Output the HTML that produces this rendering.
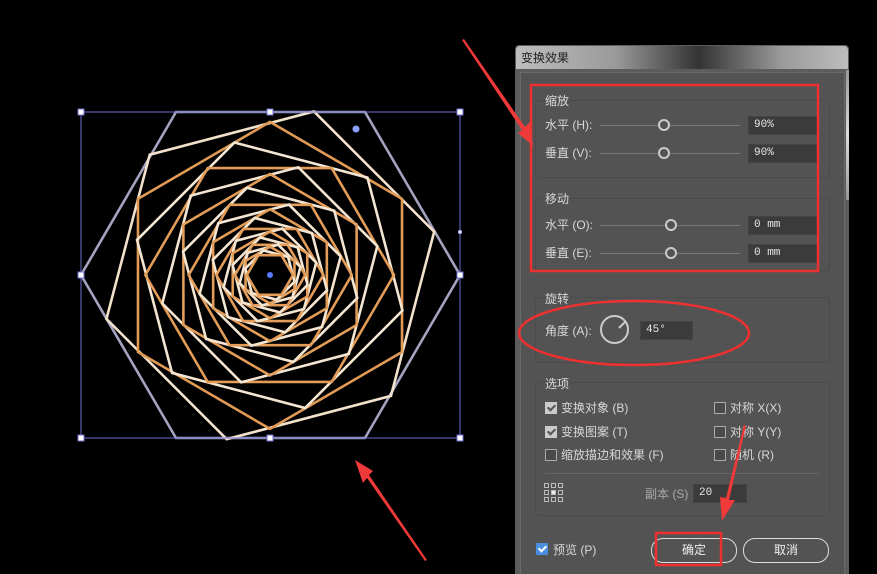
<!DOCTYPE html>
<html><head><meta charset="utf-8"><style>
html,body{margin:0;width:877px;height:574px;overflow:hidden}
body{background:#000;position:relative;font-family:"Liberation Sans","Noto Sans CJK SC",sans-serif;font-size:12px;color:#d8d8d8}
.a{position:absolute;line-height:14px}
.in{position:absolute;background:#3b3b3b;border:1px solid #444;color:#e6e6e6;font-family:"Liberation Mono","Noto Sans CJK SC",monospace;font-size:11px;line-height:17px;padding-left:5px;box-sizing:border-box}
.grp{position:absolute;border:1px solid #4b4b4b;border-radius:3px}
.sl{position:absolute;height:1px;background:#777}
.kn{position:absolute;width:8px;height:8px;border:2px solid #ccc;border-radius:50%;background:#535353}
.cb{position:absolute;width:10px;height:10px;border:1px solid #aaa;background:#4a4a4a}
.cb.on{background:#ccc;border-color:#ccc}
.cb.on::after{content:"";position:absolute;left:3px;top:0px;width:3px;height:6px;border:solid #555;border-width:0 2px 2px 0;transform:rotate(45deg)}
.btn{position:absolute;border:1.5px solid #ddd;border-radius:12px;text-align:center;line-height:22px;color:#eee;font-size:12px;box-sizing:border-box}
</style></head><body>
<svg class="a" style="left:0;top:0" width="877" height="574">
<defs><polygon id="h" points="-94,-163 95,-163 190,0 95,163 -94,163 -189,0" vector-effect="non-scaling-stroke"/></defs>
<g transform="translate(270,275)" fill="none" stroke-width="2.6">
<use href="#h" stroke="#a3a3c0"/>
<g transform="rotate(45) scale(0.9)"><use href="#h" stroke="#f2e2cc"/>
<g transform="rotate(45) scale(0.9)"><use href="#h" stroke="#e09a55"/>
<g transform="rotate(45) scale(0.9)"><use href="#h" stroke="#f4e6d2"/>
<g transform="rotate(45) scale(0.9)"><use href="#h" stroke="#e39d58"/>
<g transform="rotate(45) scale(0.9)"><use href="#h" stroke="#f4e6d2"/>
<g transform="rotate(45) scale(0.9)"><use href="#h" stroke="#e39d58"/>
<g transform="rotate(45) scale(0.9)"><use href="#h" stroke="#f4e6d2"/>
<g transform="rotate(45) scale(0.9)"><use href="#h" stroke="#e39d58"/>
<g transform="rotate(45) scale(0.9)"><use href="#h" stroke="#f4e6d2"/>
<g transform="rotate(45) scale(0.9)"><use href="#h" stroke="#e39d58"/>
<g transform="rotate(45) scale(0.9)"><use href="#h" stroke="#f4e6d2"/>
<g transform="rotate(45) scale(0.9)"><use href="#h" stroke="#e39d58"/>
<g transform="rotate(45) scale(0.9)"><use href="#h" stroke="#f4e6d2"/>
<g transform="rotate(45) scale(0.9)"><use href="#h" stroke="#e39d58"/>
<g transform="rotate(45) scale(0.9)"><use href="#h" stroke="#f4e6d2"/>
<g transform="rotate(45) scale(0.9)"><use href="#h" stroke="#e39d58"/>
<g transform="rotate(45) scale(0.9)"><use href="#h" stroke="#f4e6d2"/>
<g transform="rotate(45) scale(0.9)"><use href="#h" stroke="#e39d58"/>
<g transform="rotate(45) scale(0.9)"><use href="#h" stroke="#f4e6d2"/>
<g transform="rotate(45) scale(0.9)"><use href="#h" stroke="#e39d58"/>
</g></g></g></g></g></g></g></g></g></g></g></g></g></g></g></g></g></g></g></g>
</g>
<rect x="81" y="112" width="379" height="326" fill="none" stroke="#7070d0" stroke-width="1"/>
<g fill="#fff" stroke="#7070d0">
<rect x="78" y="109" width="6" height="6"/><rect x="267" y="109" width="6" height="6"/><rect x="457" y="109" width="6" height="6"/>
<rect x="78" y="272" width="6" height="6"/><rect x="457" y="272" width="6" height="6"/>
<rect x="78" y="435" width="6" height="6"/><rect x="267" y="435" width="6" height="6"/><rect x="457" y="435" width="6" height="6"/>
</g>
<circle cx="270" cy="275" r="3" fill="#5a7aff"/>
<circle cx="356" cy="129" r="3.5" fill="#8aa0ff"/>
<circle cx="460" cy="232" r="2" fill="#c0c8ff"/>
</svg>

<div class="a" style="left:515px;top:45px;width:334px;height:529px;background:#5c5c5c;border-radius:4px 4px 0 0"></div>
<div class="a" style="left:516px;top:46px;width:332px;height:23px;background:linear-gradient(90deg,#bdbdbd,#9a9a9a 30%,#333 55%,#9a9a9a 80%,#bdbdbd);border-radius:4px 4px 0 0"></div>
<div class="a" style="left:521px;top:51px;color:#222;font-size:12px">变换效果</div>
<div class="a" style="left:520px;top:72px;width:325px;height:502px;background:#535353;border-left:1px solid #6a6a6a;border-right:1px solid #6a6a6a;border-top:1px solid #6a6a6a;box-sizing:border-box"></div>
<div class="a" style="left:846px;top:70px;width:3px;height:130px;background:linear-gradient(#999,#ddd,#999)"></div>

<div class="grp" style="left:535px;top:100px;width:293px;height:76px"></div>
<div class="a" style="left:545px;top:94px;background:#535353">缩放</div>
<div class="a" style="left:545px;top:118px">水平 (H):</div>
<div class="sl" style="left:600px;top:125px;width:140px"></div><div class="kn" style="left:658px;top:119px"></div>
<div class="in" style="left:748px;top:116px;width:70px;height:19px">90%</div>
<div class="a" style="left:545px;top:146px">垂直 (V):</div>
<div class="sl" style="left:600px;top:153px;width:140px"></div><div class="kn" style="left:658px;top:147px"></div>
<div class="in" style="left:748px;top:144px;width:70px;height:19px">90%</div>

<div class="grp" style="left:535px;top:198px;width:293px;height:72px"></div>
<div class="a" style="left:545px;top:192px;background:#535353">移动</div>
<div class="a" style="left:545px;top:218px">水平 (O):</div>
<div class="sl" style="left:600px;top:225px;width:140px"></div><div class="kn" style="left:665px;top:219px"></div>
<div class="in" style="left:748px;top:216px;width:70px;height:19px">0 mm</div>
<div class="a" style="left:545px;top:246px">垂直 (E):</div>
<div class="sl" style="left:600px;top:253px;width:140px"></div><div class="kn" style="left:665px;top:247px"></div>
<div class="in" style="left:748px;top:244px;width:70px;height:19px">0 mm</div>

<div class="grp" style="left:535px;top:297px;width:293px;height:64px"></div>
<div class="a" style="left:545px;top:292px;background:#535353">旋转</div>
<div class="a" style="left:545px;top:324px">角度 (A):</div>
<div class="a" style="left:600px;top:315px;width:29px;height:29px;border:2px solid #ccc;border-radius:50%;box-sizing:border-box"></div>
<div class="a" style="left:618px;top:318px;width:2px;height:10px;background:#ccc;transform:rotate(45deg);transform-origin:bottom"></div>
<div class="in" style="left:640px;top:321px;width:53px;height:19px">45°</div>

<div class="grp" style="left:535px;top:382px;width:293px;height:132px"></div>
<div class="a" style="left:545px;top:377px;background:#535353">选项</div>
<div class="cb on" style="left:545px;top:402px"></div><div class="a" style="left:561px;top:401px">变换对象 (B)</div>
<div class="cb on" style="left:545px;top:426px"></div><div class="a" style="left:561px;top:425px">变换图案 (T)</div>
<div class="cb" style="left:545px;top:449px"></div><div class="a" style="left:561px;top:448px">缩放描边和效果 (F)</div>
<div class="cb" style="left:714px;top:402px"></div><div class="a" style="left:730px;top:401px">对称 X(X)</div>
<div class="cb" style="left:714px;top:426px"></div><div class="a" style="left:730px;top:425px">对称 Y(Y)</div>
<div class="cb" style="left:714px;top:449px"></div><div class="a" style="left:730px;top:448px">随机 (R)</div>
<div class="a" style="left:545px;top:473px;width:273px;height:1px;background:#666"></div>
<svg class="a" style="left:544px;top:483px" width="20" height="20" fill="none" stroke="#bbb" stroke-width="1">
<rect x="0.5" y="0.5" width="4" height="4"/><rect x="7.5" y="0.5" width="4" height="4"/><rect x="14.5" y="0.5" width="4" height="4"/>
<rect x="0.5" y="7.5" width="4" height="4"/><rect x="7.5" y="7.5" width="4" height="4" fill="#eee"/><rect x="14.5" y="7.5" width="4" height="4"/>
<rect x="0.5" y="14.5" width="4" height="4"/><rect x="7.5" y="14.5" width="4" height="4"/><rect x="14.5" y="14.5" width="4" height="4"/>
</svg>
<div class="a" style="left:645px;top:487px;color:#aaa">副本 (S)</div>
<div class="in" style="left:693px;top:484px;width:54px;height:19px">20</div>

<div class="a" style="left:536px;top:543px;width:12px;height:12px;background:#4a8ee0;border-radius:1px"></div>
<div class="a" style="left:540px;top:544px;width:3px;height:6px;border:solid #fff;border-width:0 2px 2px 0;transform:rotate(45deg)"></div>
<div class="a" style="left:553px;top:543px">预览 (P)</div>
<div class="btn" style="left:651px;top:538px;width:86px;height:25px">确定</div>
<div class="btn" style="left:743px;top:538px;width:86px;height:25px">取消</div>

<svg class="a" style="left:0;top:0" width="877" height="574">
<g fill="none" stroke="#ee3030" stroke-width="2.5">
<rect x="531" y="85" width="287" height="186"/>
<ellipse cx="634" cy="333" rx="115" ry="32"/>
<rect x="656" y="533" width="65" height="32"/>
</g>
<g fill="#f03a3a">
<polygon points="462,40 464,39 525,127 530,122 533,146 518,133 522,130"/>
<polygon points="427,560 425,561 367,478 363,483 355,460 373,471 369,475"/>
<polygon points="744,425 746,426 729,500 735,500 722,521 720,497 726,498"/>
</g>
</svg>
</body></html>
